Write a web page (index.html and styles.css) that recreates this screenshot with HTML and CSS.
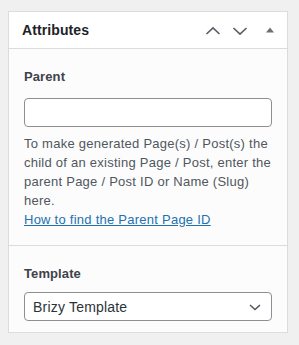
FILE: index.html
```html
<!DOCTYPE html>
<html>
<head>
<meta charset="utf-8">
<link rel="stylesheet" href="styles.css">
</head>
<body>
<div class="panel">
  <div class="panel-header">
    <h2 class="panel-title">Attributes</h2>
    <div class="panel-actions">
      <button class="icon-btn" aria-label="Move up">
        <svg width="20" height="20" viewBox="0 0 20 20"><path d="M3.5 14 L10 8 L16.5 14" fill="none" stroke="#5a6066" stroke-width="1.7"/></svg>
      </button>
      <button class="icon-btn" aria-label="Move down">
        <svg width="20" height="20" viewBox="0 0 20 20"><path d="M3.5 8 L10 14 L16.5 8" fill="none" stroke="#5a6066" stroke-width="1.7"/></svg>
      </button>
      <button class="icon-btn toggle" aria-label="Toggle panel">
        <svg width="20" height="20" viewBox="0 0 20 20"><path d="M6 12.5 L10 7.5 L14 12.5 Z" fill="#6c7177"/></svg>
      </button>
    </div>
  </div>
  <div class="panel-body">
    <div class="section">
      <label class="field-label" for="parent">Parent</label>
      <input id="parent" class="text-input" type="text">
      <p class="help">To make generated Page(s) / Post(s) the child of an existing Page / Post, enter the parent Page / Post ID or Name (Slug) here.<br><a href="#" class="help-link">How to find the Parent Page ID</a></p>
    </div>
    <div class="section section-last">
      <label class="field-label" for="template">Template</label>
      <div class="select">
        <span class="select-value">Brizy Template</span>
        <svg class="select-arrow" width="16" height="16" viewBox="0 0 16 16"><path d="M3 6 L8 10.5 L13 6" fill="none" stroke="#50575e" stroke-width="1.5"/></svg>
      </div>
    </div>
  </div>
</div>
</body>
</html>
```
FILE: styles.css
```css
html, body {
  margin: 0;
  padding: 0;
}
body {
  background: #f0f0f1;
  font-family: "Liberation Sans", Arial, sans-serif;
  color: #1e1e1e;
  padding: 11px 11px 0 8px;
  width: 299px;
  height: 345px;
  box-sizing: border-box;
}
.panel {
  border: 1px solid #dcdcde;
  background: #fcfcfc;
}
.panel-header {
  display: flex;
  align-items: center;
  justify-content: space-between;
  height: 36px;
  background: #fff;
  border-bottom: 1px solid #dcdcde;
  padding: 0 7px 0 13px;
}
.panel-title {
  margin: 0;
  font-size: 14px;
  font-weight: 700;
  color: #1d2327;
  letter-spacing: 0.1px;
}
.panel-actions {
  display: flex;
  align-items: center;
  gap: 7px;
}
.icon-btn {
  border: 0;
  background: none;
  padding: 0;
  width: 20px;
  height: 20px;
  display: flex;
}
.toggle {
  margin-left: 3px;
}
.section {
  padding: 19px 15px 16px 15px;
  border-bottom: 1px solid #dcdcde;
}
.section-last {
  border-bottom: 0;
  padding: 19px 15px 11px 15px;
}
.field-label {
  display: block;
  font-size: 13px;
  line-height: 18px;
  font-weight: 700;
  color: #3c434a;
  letter-spacing: 0.1px;
}
.text-input {
  display: block;
  box-sizing: border-box;
  width: 100%;
  height: 29px;
  margin: 12px 0 0;
  border: 1px solid #8c8f94;
  border-radius: 4px;
  background: #fff;
}
.help {
  margin: 7px 0 0;
  font-size: 13px;
  line-height: 19px;
  color: #50575e;
  letter-spacing: 0.25px;
}
.help-link {
  color: #2271b1;
  text-decoration: underline;
}
.select {
  margin-top: 9px;
  box-sizing: border-box;
  height: 29px;
  border: 1px solid #8c8f94;
  border-radius: 4px;
  background: #fff;
  display: flex;
  align-items: center;
  justify-content: space-between;
  padding: 0 8px 0 8px;
}
.select-value {
  font-size: 14px;
  color: #2c3338;
  letter-spacing: 0.2px;
}
.select-arrow {
  display: block;
}
```
